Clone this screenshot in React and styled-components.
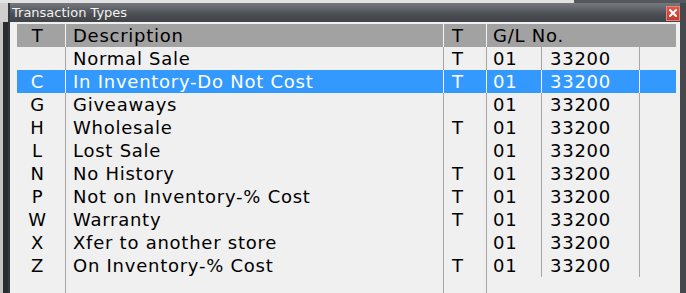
import styled, {createGlobalStyle} from 'styled-components';

const GlobalStyle=createGlobalStyle`
	html,body{
		margin:0;
		padding:0;
		background:#d4d4d4;
		overflow:hidden;
	}
`
const Screen=styled.div`
	width:686px;
	height:293px;
	display:flex;
	flex-direction:column;
	font-family:'DejaVu Sans',Verdana,sans-serif;
`
const TopStrip=styled.div`
	height:3px;
	display:flex;
`
const TopPart=styled.div`
	flex:${p=>p.$grow?1:'0 0 574px'};
	background:${p=>p.$dark?'#55585c':'#e2e2e2'};
`
const Main=styled.div`
	flex:1;
	display:flex;
	min-height:0;
`
const LeftEdge=styled.div`
	width:8px;
	background:
		linear-gradient(to bottom,#cfcfcf 0 19px,transparent 19px),
		linear-gradient(to right,#c4c4c4 0 3px,#2a2b2d 3px);
`
const Window=styled.div`
	flex:1;
	display:flex;
	flex-direction:column;
	border-left:2px solid #36393c;
	border-right:6px solid #45484c;
`
const TitleBar=styled.div`
	height:19px;
	display:flex;
	align-items:center;
	justify-content:space-between;
	padding-left:2px;
	background:linear-gradient(to bottom,#76797d,#4a4d51 60%,#404347);
`
const Title=styled.span`
	color:#f2f2f2;
	font-size:13px;
`
const CloseButton=styled.div`
	width:14px;
	height:15px;
	box-sizing:border-box;
	margin-top:1px;
	border:1px solid #e9857c;
	background:linear-gradient(to bottom,#e0574b,#c23a30);
	display:flex;
	align-items:center;
	justify-content:center;
`
const Content=styled.div`
	flex:1;
	min-height:0;
	background:#f0f0f0;
	padding:2px 4px 0 7px;
	display:flex;
`
const Grid=styled.div`
	flex:1;
	display:grid;
	grid-template-columns:49px 378px 43px 55px 98px 36px;
	grid-template-rows:23px repeat(10,23px) 1fr;
	font-size:18px;
	letter-spacing:0.75px;
`
const Cell=styled.div`
	box-sizing:border-box;
	display:flex;
	align-items:center;
	white-space:nowrap;
	overflow:hidden;
	justify-content:${p=>p.$center?'center':'flex-start'};
	padding:${p=>p.$center?'0 7px 0 0':`0 0 0 ${p.$pad||0}px`};
	grid-column:${p=>p.$span?`span ${p.$span}`:'auto'};
	background:${p=>p.$bg||'transparent'};
	color:${p=>p.$light?'#ffffff':'#000000'};
	border-right:${p=>p.$line?`1px solid ${p.$line}`:'none'};
`

const rows=[
	['','Normal Sale','T','01','33200'],
	['C','In Inventory-Do Not Cost','T','01','33200'],
	['G','Giveaways','','01','33200'],
	['H','Wholesale','T','01','33200'],
	['L','Lost Sale','','01','33200'],
	['N','No History','T','01','33200'],
	['P','Not on Inventory-% Cost','T','01','33200'],
	['W','Warranty','T','01','33200'],
	['X','Xfer to another store','','01','33200'],
	['Z','On Inventory-% Cost','T','01','33200'],
]

const App = () => {
	const head='#a2a2a2'
	const sep='#f4f4f4'
	const line='#a6a6a6'
	return (
		<Screen>
			<GlobalStyle />
			<TopStrip>
				<TopPart />
				<TopPart $grow $dark />
			</TopStrip>
			<Main>
				<LeftEdge />
				<Window>
					<TitleBar>
						<Title>Transaction Types</Title>
						<CloseButton>
							<svg width="8" height="8" viewBox="0 0 8 8">
								<path d="M1 1L7 7M7 1L1 7" stroke="#fff" strokeWidth="2" strokeLinecap="square" />
							</svg>
						</CloseButton>
					</TitleBar>
					<Content>
						<Grid>
							<Cell $center $bg={head} $line={sep}>T</Cell>
							<Cell $pad={7} $bg={head} $line={sep}>Description</Cell>
							<Cell $pad={8} $bg={head} $line={sep}>T</Cell>
							<Cell $pad={6} $bg={head} $span={3}>G/L No.</Cell>
							{rows.map((r,i)=>{
								const sel=i===1
								const bg=sel?'#3399ff':undefined
								const l=sel?sep:line
								return [
									<Cell key={i+'a'} $center $bg={bg} $light={sel} $line={l}>{r[0]}</Cell>,
									<Cell key={i+'b'} $pad={7} $bg={bg} $light={sel} $line={l}>{r[1]}</Cell>,
									<Cell key={i+'c'} $pad={8} $bg={bg} $light={sel} $line={l}>{r[2]}</Cell>,
									<Cell key={i+'d'} $pad={6} $bg={bg} $light={sel} $line={l}>{r[3]}</Cell>,
									<Cell key={i+'e'} $pad={8} $bg={bg} $light={sel} $line={l}>{r[4]}</Cell>,
									<Cell key={i+'f'} $bg={bg} />,
								]
							})}
							<Cell $line={line} />
							<Cell $line={line} />
							<Cell $line={line} />
							<Cell $span={3} />
						</Grid>
					</Content>
				</Window>
			</Main>
		</Screen>
	)
}

export default App
